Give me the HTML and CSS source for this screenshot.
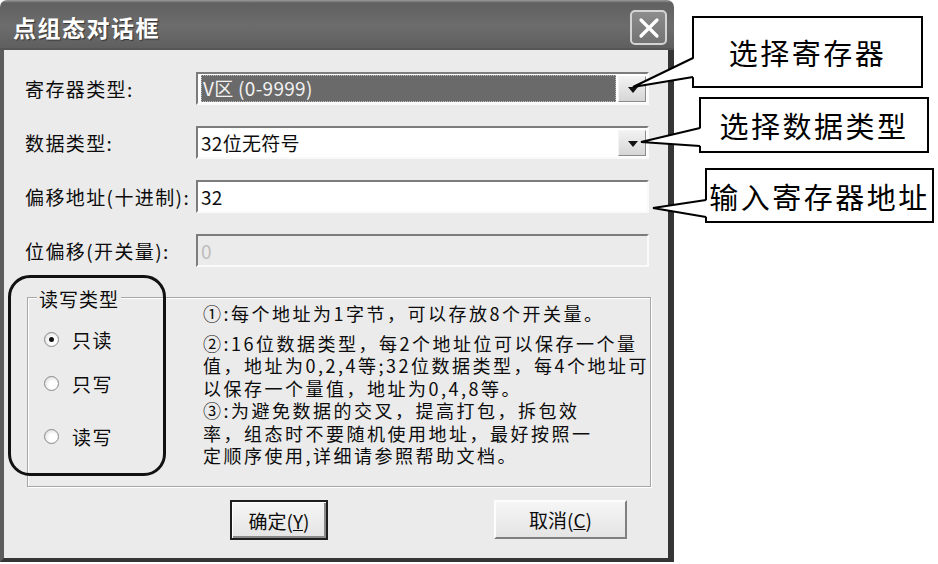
FILE: index.html
```html
<!DOCTYPE html>
<html lang="zh-CN">
<head>
    <meta charset="UTF-8">
    <title>点组态对话框</title>
    <link rel="stylesheet" href="styles.css">
</head>
<body>
<div class="stage">
    <div class="dialog">
        <div class="titlebar">
            <span class="title">点组态对话框</span>
            <span class="close">
                <svg width="22" height="22" viewBox="0 0 22 22"><path d="M3 3 L19 19 M19 3 L3 19" stroke="#fff" stroke-width="3.2" stroke-linecap="round"/></svg>
            </span>
        </div>
        <div class="body">
            <div class="row">
                <span class="label">寄存器类型:</span>
                <div class="field combo selected">
                    <span class="value">V区 (0-9999)</span>
                    <span class="drop"></span>
                </div>
            </div>
            <div class="row">
                <span class="label">数据类型:</span>
                <div class="field combo">
                    <span class="value">32位无符号</span>
                    <span class="drop"></span>
                </div>
            </div>
            <div class="row">
                <span class="label">偏移地址(十进制):</span>
                <div class="field"><span class="value">32</span></div>
            </div>
            <div class="row">
                <span class="label">位偏移(开关量):</span>
                <div class="field disabled"><span class="value">0</span></div>
            </div>

            <div class="group">
                <span class="legend">读写类型</span>
                <div class="radios">
                    <div class="radio checked"><span class="dot"></span>只读</div>
                    <div class="radio"><span class="dot"></span>只写</div>
                    <div class="radio"><span class="dot"></span>读写</div>
                </div>
                <div class="notes">
                    <div class="para">①:每个地址为1字节，可以存放8个开关量。</div>
                    <div>②:16位数据类型，每2个地址位可以保存一个量</div>
                    <div>值，地址为0,2,4等;32位数据类型，每4个地址可</div>
                    <div>以保存一个量值，地址为0,4,8等。</div>
                    <div>③:为避免数据的交叉，提高打包，拆包效</div>
                    <div>率，组态时不要随机使用地址，最好按照一</div>
                    <div>定顺序使用,详细请参照帮助文档。</div>
                </div>
            </div>

            <div class="buttons">
                <button class="btn default">确定(<u>Y</u>)</button>
                <button class="btn cancel">取消(<u>C</u>)</button>
            </div>
        </div>
    </div>

    <!-- 标注 -->
    <div class="callout c1">选择寄存器</div>
    <div class="callout c2">选择数据类型</div>
    <div class="callout c3">输入寄存器地址</div>
    <svg class="tails" width="938" height="564" viewBox="0 0 938 564">
        <polygon points="695,58 633,87 695,77" fill="#fff"/>
        <polyline points="693,58 633,87 693,77" fill="none" stroke="#000" stroke-width="2"/>
        <polygon points="702,128 641,142 702,146" fill="#fff"/>
        <polyline points="700,128 641,142 700,146" fill="none" stroke="#000" stroke-width="2"/>
        <polygon points="708,200 653,208 708,217" fill="#fff"/>
        <polyline points="706,200 653,208 706,217" fill="none" stroke="#000" stroke-width="2"/>
    </svg>
    <div class="ring"></div>
</div>
</body>
</html>
```

FILE: styles.css
```css
* {
    box-sizing: border-box;
}
body {
    margin: 0;
    background-color: #fff;
    font-family: "Noto Sans CJK SC", "Noto Sans", sans-serif;
    color: #0c0c0c;
}
.stage {
    position: relative;
    width: 938px;
    height: 564px;
}
.dialog {
    width: 674px;
    height: 562px;
    display: flex;
    flex-direction: column;
}
.titlebar {
    height: 50px;
    display: flex;
    justify-content: space-between;
    padding: 0 7px 0 13px;
    border-radius: 7px 7px 0 0;
    background: linear-gradient(#9a9a9a, #616161 6%, #6c6c6c 55%, #5f5f5f);
    border-bottom: 2px solid #555;
}
.title {
    align-self: center;
    margin-top: 6px;
    color: #fff;
    font-size: 23px;
    font-weight: 700;
    letter-spacing: 1.5px;
    text-shadow: 1px 1px 1px #333;
}
.close {
    width: 37px;
    height: 35px;
    margin-top: 10px;
    display: flex;
    align-items: center;
    justify-content: center;
    border: 2px solid #d4d4d4;
    border-radius: 5px;
    background: linear-gradient(#8c8c8c, #737373);
}
.body {
    flex: 1;
    background-color: #ebebeb;
    border-left: 4px solid #5c5c5c;
    border-right: 6px solid #353535;
    border-bottom: 4px solid #353535;
    padding: 22px 0 0 21px;
}
.row {
    display: flex;
    align-items: center;
    height: 33px;
    margin-bottom: 21px;
}
.label {
    width: 171px;
    font-size: 19px;
    letter-spacing: 1.4px;
    white-space: nowrap;
}
.field {
    width: 453px;
    height: 33px;
    display: flex;
    align-items: center;
    justify-content: space-between;
    padding: 0 1px 0 3px;
    border: 2px solid;
    border-color: #7c7c7c #fafafa #fafafa #7c7c7c;
    background-color: #fff;
    font-size: 19px;
}
.field .value {
    letter-spacing: 0.3px;
}
.field.selected .value {
    flex: 1;
    margin-right: 2px;
    height: 27px;
    line-height: 26px;
    color: #f2f2f2;
    background-color: #6a6a6a;
    outline: 1px dotted #bbb;
    outline-offset: -1px;
    padding-left: 2px;
}
.drop {
    position: relative;
    width: 28px;
    height: 26px;
    background: linear-gradient(#f2f2f2, #d6d6d6);
    border: 1px solid;
    border-color: #f4f4f4 #8a8a8a #8a8a8a #f4f4f4;
}
.drop::after {
    content: "";
    position: absolute;
    left: 9px;
    top: 10px;
    border-left: 5px solid transparent;
    border-right: 5px solid transparent;
    border-top: 6px solid #111;
}
.field.disabled {
    background-color: #ebebeb;
    color: #bdbdbd;
}
.group {
    position: relative;
    display: flex;
    width: 624px;
    height: 190px;
    margin: 30px 0 0 2px;
    border: 1px solid #a6a6a6;
    box-shadow: 1px 1px 0 #fff, inset 1px 1px 0 #fff;
}
.legend {
    position: absolute;
    left: 9px;
    top: -13px;
    padding: 0 2px;
    line-height: 27px;
    font-size: 19px;
    letter-spacing: 1px;
    background-color: #ebebeb;
}
.radios {
    flex-shrink: 0;
    width: 175px;
    padding: 29px 0 0 16px;
    font-size: 19px;
    letter-spacing: 1.5px;
}
.radio {
    display: flex;
    align-items: center;
    height: 24px;
    margin-bottom: 20px;
}
.radio:nth-child(2) {
    margin-bottom: 29px;
}
.dot {
    position: relative;
    width: 15px;
    height: 15px;
    margin-right: 13px;
    border-radius: 50%;
    border: 1px solid #8a8a8a;
    background: radial-gradient(circle at 60% 60%, #fff 35%, #cfcfcf);
}
.radio.checked .dot::after {
    content: "";
    position: absolute;
    left: 4px;
    top: 4px;
    width: 5px;
    height: 5px;
    border-radius: 50%;
    background-color: #111;
}
.notes {
    padding-top: 4px;
    font-size: 18px;
    line-height: 22.5px;
    letter-spacing: 2.5px;
    white-space: nowrap;
}
.notes .para {
    margin-bottom: 7px;
}
.buttons {
    display: flex;
    margin-top: 13px;
    padding-left: 205px;
}
.btn {
    height: 40px;
    padding: 0;
    font-family: inherit;
    font-size: 19px;
    color: #0c0c0c;
    background: linear-gradient(#f6f6f6, #e4e4e4);
    border: 2px solid;
    border-color: #fdfdfd #808080 #808080 #fdfdfd;
}
.btn.default {
    width: 98px;
    border: 2px solid #1e1e1e;
    box-shadow: inset 1px 1px 0 #fff, inset -2px -2px 0 #8a8a8a;
}
.btn.cancel {
    width: 133px;
    height: 39px;
    margin-left: 166px;
}
.callout {
    position: absolute;
    display: flex;
    align-items: center;
    justify-content: center;
    border: 2px solid #000;
    background-color: #fff;
    font-size: 29px;
    letter-spacing: 2.5px;
    color: #000;
    white-space: nowrap;
}
.c1 {
    left: 692px;
    top: 16px;
    width: 231px;
    height: 72px;
}
.c2 {
    left: 699px;
    top: 97px;
    width: 230px;
    height: 56px;
}
.c3 {
    left: 705px;
    top: 168px;
    width: 229px;
    height: 55px;
}
.tails {
    position: absolute;
    left: 0;
    top: 0;
}
.ring {
    position: absolute;
    left: 8px;
    top: 275px;
    width: 158px;
    height: 201px;
    border: 3px solid #111;
    border-radius: 22px;
}
```
